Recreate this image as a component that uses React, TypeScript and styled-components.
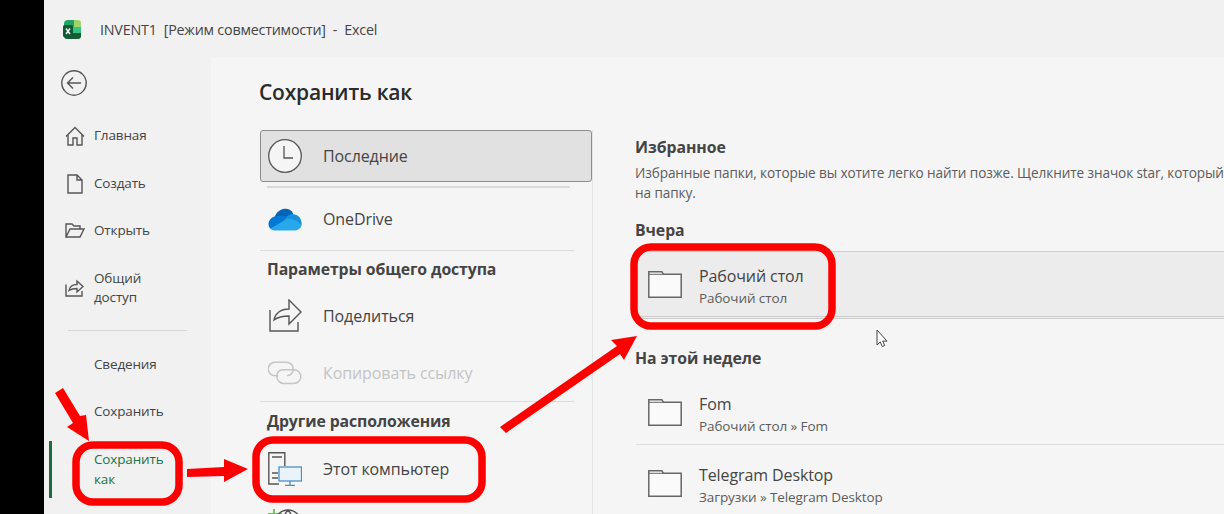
import React, { FC, ReactNode } from 'react'
import styled, { createGlobalStyle } from 'styled-components'

const GlobalStyle = createGlobalStyle`
  html, body {
    margin: 0;
    padding: 0;
    background: #000;
    overflow: hidden;
  }
  * {
    box-sizing: border-box;
  }
`

const Page = styled.div`
  position: relative;
  display: flex;
  width: 1224px;
  height: 514px;
  overflow: hidden;
  font-family: 'Open Sans', 'Noto Sans', sans-serif;
  color: #3c3c3c;
`

const BlackEdge = styled.div`
  flex: 0 0 44px;
  background: #000;
`

const Window = styled.div`
  flex: 1;
  min-width: 0;
  display: flex;
  flex-direction: column;
  background: #f1f1f1;
`

const TitleBar = styled.div`
  flex: 0 0 57px;
  display: flex;
  align-items: center;
  padding: 2px 0 0 19px;
  gap: 18px;
  font-size: 14.3px;
  letter-spacing: -0.2px;
  color: #444;
  white-space: pre;
`

const Body = styled.div`
  flex: 1;
  min-height: 0;
  display: flex;
`

const Sidebar = styled.nav`
  flex: 0 0 167px;
  padding-top: 13px;
`

const BackButton = styled.div`
  display: flex;
  margin: 0 0 16px 17px;
  height: 26px;
`

const NavItem = styled.div<{ $h: number; $top?: number; $active?: boolean }>`
  position: relative;
  display: flex;
  align-items: center;
  gap: 9px;
  height: ${(p) => p.$h}px;
  margin-top: ${(p) => p.$top ?? 0}px;
  padding-left: 20px;
  font-size: 13.5px;
  line-height: 19.5px;
  letter-spacing: -0.15px;
  color: ${(p) => (p.$active ? '#217346' : '#444')};

  &::before {
    content: '';
    display: ${(p) => (p.$active ? 'block' : 'none')};
    position: absolute;
    left: 5px;
    top: 0;
    bottom: 0;
    width: 2.5px;
    background: #1e6b42;
  }
`

const NavIcon = styled.span`
  flex: 0 0 21px;
  display: flex;
  justify-content: center;
`

const NavDivider = styled.div`
  height: 1px;
  margin: 8px 24px 10px 24px;
  background: #d6d6d6;
`

const Main = styled.main`
  flex: 1;
  min-width: 0;
  padding: 21px 0 0 48px;
  background: #f5f5f5;
  overflow: hidden;
`

const PageTitle = styled.h1`
  margin: 0 0 24px;
  font-size: 21px;
  line-height: 28px;
  font-weight: 600;
  letter-spacing: -0.2px;
  color: #2b2b2b;
`

const Columns = styled.div`
  display: flex;
`

const Locations = styled.div`
  flex: 0 0 334px;
  height: 400px;
  border-right: 1px solid #e4e4e4;
`

const LocationRow = styled.div<{ $h: number; $selected?: boolean; $muted?: boolean }>`
  display: flex;
  align-items: center;
  gap: 11px;
  height: ${(p) => p.$h}px;
  width: 332px;
  margin-left: 1px;
  padding-left: 7px;
  font-size: 16px;
  letter-spacing: -0.1px;
  color: ${(p) => (p.$muted ? '#c4c4c4' : '#444')};
  background: ${(p) => (p.$selected ? '#e1e1e1' : 'transparent')};
  border: 1px solid ${(p) => (p.$selected ? '#8c8c8c' : 'transparent')};
  border-radius: 3px;
`

const LocationIcon = styled.span`
  flex: 0 0 34px;
  min-width: 0;
  width: 34px;
  display: flex;
  justify-content: center;
  margin-right: 10px;
`

const ThickRule = styled.div`
  height: 2px;
  width: 303px;
  margin: 4px 0 0 8px;
  background: #d9d9d9;
`

const ThinRule = styled.div`
  height: 1px;
  width: 314px;
  margin-left: 1px;
  background: #dcdcdc;
`

const GroupTitle = styled.h2<{ $h: number }>`
  display: flex;
  align-items: center;
  height: ${(p) => p.$h}px;
  margin: 0 0 0 8px;
  font-size: 15.8px;
  font-weight: 700;
  letter-spacing: -0.1px;
  color: #444;
`

const Recent = styled.section`
  flex: 1;
  min-width: 0;
  margin: 6px 0 0 42px;
  white-space: nowrap;
`

const RecentHeading = styled.h2<{ $top?: number; $bottom?: number }>`
  margin: ${(p) => p.$top ?? 0}px 0 ${(p) => p.$bottom ?? 0}px;
  height: 22px;
  font-size: 15.8px;
  line-height: 22px;
  font-weight: 700;
  letter-spacing: -0.05px;
  color: #444;
`

const Hint = styled.p`
  margin: 5px 0 16px;
  font-size: 13.6px;
  line-height: 20px;
  letter-spacing: -0.1px;
  color: #5c5c5c;
`

const FolderRow = styled.div<{ $h: number; $hot?: boolean; $ruled?: boolean }>`
  display: flex;
  align-items: center;
  gap: 17px;
  height: ${(p) => p.$h}px;
  margin-left: 1px;
  padding-left: 12px;
  background: ${(p) => (p.$hot ? '#ececec' : 'transparent')};
  border-top: ${(p) => (p.$hot ? '1px solid #cdcdcd' : 'none')};
  border-bottom: ${(p) =>
    p.$hot ? '3px double #cdcdcd' : p.$ruled ? '1px solid #dedede' : 'none'};
`

const FolderText = styled.div`
  padding-top: 7px;
`

const FolderName = styled.div`
  font-size: 16px;
  line-height: 21px;
  letter-spacing: -0.1px;
  color: #444;
`

const FolderPath = styled.div`
  font-size: 13.5px;
  line-height: 22px;
  letter-spacing: -0.1px;
  color: #5c5c5c;
`

const Annotations = styled.svg`
  position: absolute;
  left: 0;
  top: 0;
  pointer-events: none;
`

const line = { fill: 'none', stroke: '#555', strokeWidth: 1.4 }

const ExcelLogo: FC = () => (
  <svg width="19" height="20" viewBox="0 0 19 20">
    <path d="M5 0h6v7H1V4a4 4 0 0 1 4-4z" fill="#21a366" />
    <path d="M11 0h4a3 3 0 0 1 3 3v4h-7z" fill="#9fd46a" />
    <rect x="1" y="7" width="8.500" height="6" fill="#107c41" />
    <rect x="9.500" y="7" width="8.500" height="6" fill="#33c481" />
    <path d="M1 13h17v3a3 3 0 0 1-3 3H4a3 3 0 0 1-3-3z" fill="#185c37" />
    <rect x="0" y="5" width="10" height="12" rx="1.500" fill="#0e5c33" />
    <path d="M3 8.500l4 5.500M7 8.500l-4 5.500" stroke="#fff" strokeWidth="1.400" />
  </svg>
)

const BackIcon: FC = () => (
  <svg width="26" height="26" viewBox="0 0 26 26">
    <circle cx="13" cy="13" r="12.200" {...line} />
    <path d="M20 13H6.500M12 7.500L6.500 13l5.500 5.500" {...line} />
  </svg>
)

const HomeIcon: FC = () => (
  <svg width="20" height="20" viewBox="0 0 20 20">
    <path d="M1 10.500L10 1.500l9 9M3 8.500V19h5v-7h4v7h5V8.500" {...line} />
  </svg>
)

const NewIcon: FC = () => (
  <svg width="16" height="20" viewBox="0 0 16 20">
    <path d="M1 1h9l5 5v13H1zM10 1v5h5" {...line} />
  </svg>
)

const OpenIcon: FC = () => (
  <svg width="20" height="16" viewBox="0 0 20 16">
    <path d="M1 14V1h6l2 2h6v3M1 14l4-8h14l-4 8z" {...line} />
  </svg>
)

const ShareSmallIcon: FC = () => (
  <svg width="20" height="20" viewBox="0 0 20 20">
    <path d="M1 6.500V18h16v-5" {...line} />
    <path d="M4 12.500c.6-3.500 3.600-6 8-6V3l6 5.500-6 5.500v-3.500c-3.500 0-6 .6-8 2z" {...line} />
  </svg>
)

const ClockIcon: FC = () => (
  <svg width="34" height="34" viewBox="0 0 34 34">
    <circle cx="17" cy="17" r="16.300" fill="#f5f5f5" stroke="#555" strokeWidth="1.300" />
    <path d="M16 7v12h9" fill="none" stroke="#555" strokeWidth="1.300" />
  </svg>
)

const OneDriveIcon: FC = () => (
  <svg width="34" height="23" viewBox="0 0 35 23">
    <path d="M12 17L7 8.500C9 3 14 .5 18 .5c3.500 0 6.500 2 8 5L20 14z" fill="#0364b8" />
    <path d="M10 8c-5 0-9.500 3.500-9.500 8.500 0 2 .8 3.500 2 4.500L14 16l6-7c-3-1.500-6.500-1.500-10-1z" fill="#0078d4" />
    <path d="M26 6c-3-.4-6 1-8 4l-4 6 14 5.500 6.500-4c1-6-3-11.500-8.500-11.500z" fill="#1490df" />
    <path d="M2.500 21c1 1 2.500 1.800 4.500 1.800h21c3 0 5.500-1.800 6.500-5.300C30 12 24 10 19 11z" fill="#28a8ea" />
  </svg>
)

const ShareIcon: FC = () => (
  <svg width="33" height="33" viewBox="0 0 33 33">
    <path d="M1 11v21h28v-9" {...line} />
    <path d="M5 21c1-6 6-11 15-11V1l12 12-12 12v-8c-7 0-11 1-15 4z" {...line} />
  </svg>
)

const LinkIcon: FC = () => (
  <svg width="34" height="24" viewBox="0 0 36 25">
    <g fill="none" stroke="#c6c6c6" strokeWidth="1.600">
      <path d="M11 15.500H7.500a7.200 7.200 0 0 1 0-14.500h12a7.200 7.200 0 0 1 7.200 7.200c0 3.500-2.500 6.500-6.500 7.300" />
      <path d="M15 9h12.500a7.200 7.200 0 0 1 0 14.500h-11a7.200 7.200 0 0 1-7.200-7.200c0-3.500 2.200-6.500 5.700-7.300" />
    </g>
  </svg>
)

const ComputerIcon: FC = () => (
  <svg width="34" height="34" viewBox="0 0 34 34">
    <path d="M11 32H.8V.8h16V14" {...line} />
    <path d="M4 5h10M4 21h6M4 26h6" {...line} />
    <rect x="11" y="15" width="22.500" height="14" fill="#eaf3fa" stroke="#4a90c8" strokeWidth="1.300" />
    <path d="M22 29v4.500M17 33.500h10" stroke="#4a90c8" strokeWidth="1.300" />
  </svg>
)

const NetworkIcon: FC = () => (
  <svg width="34" height="34" viewBox="0 0 34 34">
    <path d="M6 0v12M0 5h14" stroke="#6cc24a" strokeWidth="1.800" />
    <circle cx="20" cy="14" r="13" {...line} />
    <path d="M20 1c-6 6-6 20 0 26M20 1c6 6 6 20 0 26" {...line} />
  </svg>
)

const FolderIcon: FC = () => (
  <svg width="34" height="27" viewBox="0 0 34 27">
    <path
      d="M.8.800h13l1.700 2.500h17.700v22.900H.8z"
      fill="#fafafa"
      stroke="#666"
      strokeWidth="1.500"
    />
    <path d="M.8 3.300h14.700" fill="none" stroke="#666" strokeWidth="1" />
  </svg>
)

const Nav: FC<{ h: number; top?: number; active?: boolean; icon?: ReactNode; children: ReactNode }> = ({
  h,
  top,
  active,
  icon,
  children,
}) => (
  <NavItem $h={h} $top={top} $active={active}>
    <NavIcon>{icon}</NavIcon>
    <span>{children}</span>
  </NavItem>
)

const Folder: FC<{ name: string; path: string; h: number; hot?: boolean; ruled?: boolean }> = ({
  name,
  path,
  h,
  hot,
  ruled,
}) => (
  <FolderRow $h={h} $hot={hot} $ruled={ruled}>
    <FolderIcon />
    <FolderText>
      <FolderName>{name}</FolderName>
      <FolderPath>{path}</FolderPath>
    </FolderText>
  </FolderRow>
)

const App: FC = () => {
  return (
    <Page>
      <GlobalStyle />
      <BlackEdge />
      <Window>
        <TitleBar>
          <ExcelLogo />
          <span>INVENT1  [Режим совместимости]  -  Excel</span>
        </TitleBar>
        <Body>
          <Sidebar>
            <BackButton>
              <BackIcon />
            </BackButton>
            <Nav h={48} icon={<HomeIcon />}>Главная</Nav>
            <Nav h={47} icon={<NewIcon />}>Создать</Nav>
            <Nav h={47} icon={<OpenIcon />}>Открыть</Nav>
            <Nav h={68} icon={<ShareSmallIcon />}>
              Общий
              <br />
              доступ
            </Nav>
            <NavDivider />
            <Nav h={47}>Сведения</Nav>
            <Nav h={48}>Сохранить</Nav>
            <Nav h={57} top={5} active>
              Сохранить
              <br />
              как
            </Nav>
          </Sidebar>
          <Main>
            <PageTitle>Сохранить как</PageTitle>
            <Columns>
              <Locations>
                <LocationRow $h={52} $selected>
                  <LocationIcon>
                    <ClockIcon />
                  </LocationIcon>
                  Последние
                </LocationRow>
                <ThickRule />
                <LocationRow $h={62}>
                  <LocationIcon>
                    <OneDriveIcon />
                  </LocationIcon>
                  OneDrive
                </LocationRow>
                <ThinRule />
                <GroupTitle $h={36}>Параметры общего доступа</GroupTitle>
                <LocationRow $h={57}>
                  <LocationIcon>
                    <ShareIcon />
                  </LocationIcon>
                  Поделиться
                </LocationRow>
                <LocationRow $h={57} $muted>
                  <LocationIcon>
                    <LinkIcon />
                  </LocationIcon>
                  Копировать ссылку
                </LocationRow>
                <ThinRule />
                <GroupTitle $h={38}>Другие расположения</GroupTitle>
                <LocationRow $h={57}>
                  <LocationIcon>
                    <ComputerIcon />
                  </LocationIcon>
                  Этот компьютер
                </LocationRow>
                <LocationRow $h={57}>
                  <LocationIcon>
                    <NetworkIcon />
                  </LocationIcon>
                </LocationRow>
              </Locations>
              <Recent>
                <RecentHeading>Избранное</RecentHeading>
                <Hint>
                  Избранные папки, которые вы хотите легко найти позже. Щелкните значок star, который
                  <br />
                  на папку.
                </Hint>
                <RecentHeading $bottom={10}>Вчера</RecentHeading>
                <Folder hot h={68} name="Рабочий стол" path="Рабочий стол" />
                <RecentHeading $top={28} $bottom={11}>На этой неделе</RecentHeading>
                <Folder ruled h={65} name="Fom" path="Рабочий стол » Fom" />
                <Folder h={76} name="Telegram Desktop" path="Загрузки » Telegram Desktop" />
              </Recent>
            </Columns>
          </Main>
        </Body>
      </Window>

      <Annotations width="1224" height="514" viewBox="0 0 1224 514">
        <g fill="none" stroke="#ff0000" strokeWidth="7.500">
          <rect x="76" y="445" width="103" height="57" rx="17" />
          <rect x="256" y="440" width="226" height="59" rx="17" />
          <rect x="634" y="247" width="198" height="79" rx="17" />
        </g>
        <g fill="#ff0000">
          <polygon points="55,393 63,388 80,416 86,415 89,441 67,427 73,423" />
          <polygon points="187,469 224,467 224,459 248,469 224,482 224,476 187,477" />
          <polygon points="500,427 617,346 611,340 637,336 624,360 620,354 506,433" />
        </g>
        <path
          d="M877 330v15l3.300-3 2 4.500 2.400-1-2-4.400h4.300z"
          fill="#fff"
          stroke="#444"
          strokeWidth="1"
        />
      </Annotations>
    </Page>
  )
}

export default App
